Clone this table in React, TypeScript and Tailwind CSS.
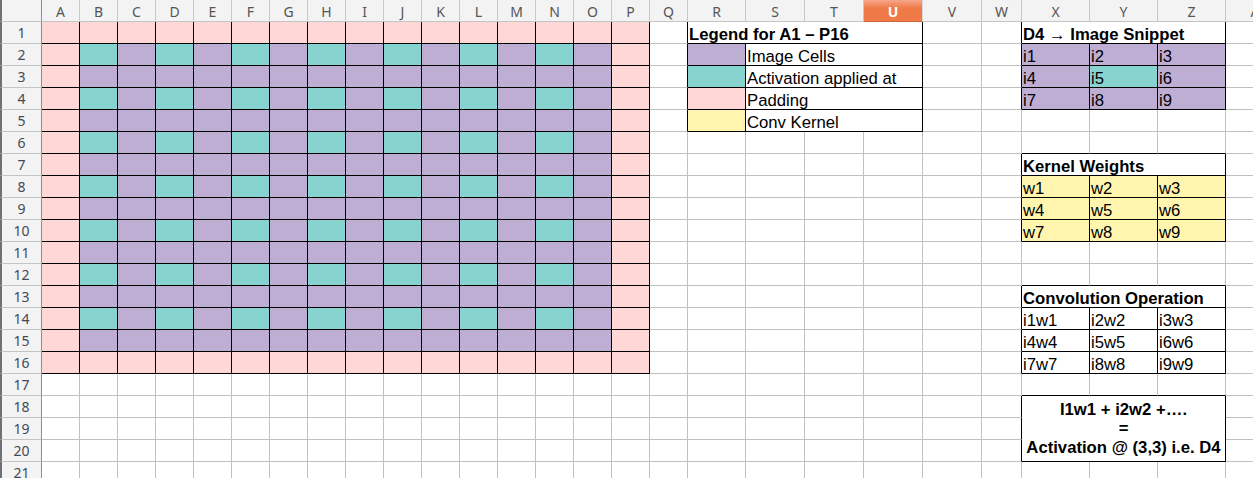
import React from 'react';
import clsx from 'clsx';

const COLS = [
  'A', 'B', 'C', 'D', 'E', 'F', 'G', 'H', 'I', 'J', 'K', 'L', 'M', 'N', 'O', 'P', 'Q',
  'R', 'S', 'T', 'U', 'V', 'W', 'X', 'Y', 'Z', 'AA',
];
const ROWS = Array.from({ length: 21 }, (_, i) => i + 1);

type Fill = 'pink' | 'teal' | 'purple' | 'yellow';

type Cell = {
  text?: string;
  fill?: Fill;
  bold?: boolean;
  colSpan?: number;
  rowSpan?: number;
  lines?: string[];
};

const fills: Record<Fill, string> = {
  pink: 'bg-[#ffd7d7]',
  teal: 'bg-[#87d3cf]',
  purple: 'bg-[#beaed4]',
  yellow: 'bg-[#fff5ae]',
};

const key = (r: number, c: number) => `${r}-${c}`;

// sheet content
const cells = new Map<string, Cell>();

for (let r = 1; r <= 16; r++) {
  for (let c = 0; c <= 15; c++) {
    let fill: Fill = 'purple';
    if (r === 1 || r === 16 || c === 0 || c === 15) fill = 'pink';
    else if (r % 2 === 0 && c % 2 === 1) fill = 'teal';
    cells.set(key(r, c), { fill });
  }
}

// legend R1:U5
cells.set(key(1, 17), { text: 'Legend for A1 – P16', bold: true, colSpan: 4 });
const legend: [Fill, string][] = [
  ['purple', 'Image Cells'],
  ['teal', 'Activation applied at'],
  ['pink', 'Padding'],
  ['yellow', 'Conv Kernel'],
];
legend.forEach(([fill, text], i) => {
  cells.set(key(i + 2, 17), { fill });
  cells.set(key(i + 2, 18), { text, colSpan: 3 });
});

// X..Z tables
const table = (top: number, title: string, fill: (n: number) => Fill, label: (n: number) => string) => {
  cells.set(key(top, 23), { text: title, bold: true, colSpan: 3 });
  for (let i = 0; i < 9; i++) {
    const n = i + 1;
    cells.set(key(top + 1 + Math.floor(i / 3), 23 + (i % 3)), { text: label(n), fill: fill(n) });
  }
};
table(1, 'D4 → Image Snippet', (n) => (n === 5 ? 'teal' : 'purple'), (n) => `i${n}`);
table(7, 'Kernel Weights', () => 'yellow', (n) => `w${n}`);
table(13, 'Convolution Operation', () => undefined as unknown as Fill, (n) => `i${n}w${n}`);
cells.set(key(18, 23), {
  colSpan: 3,
  rowSpan: 3,
  bold: true,
  lines: ['I1w1 + i2w2 +….', '=', 'Activation @ (3,3) i.e. D4'],
});

const boxed = (r: number, c: number) =>
  (r >= 1 && r <= 16 && c >= 0 && c <= 15) ||
  (r >= 1 && r <= 5 && c >= 17 && c <= 20) ||
  (c >= 23 &&
    c <= 25 &&
    ((r >= 1 && r <= 4) || (r >= 7 && r <= 10) || (r >= 13 && r <= 16) || (r >= 18 && r <= 20)));

const spanCls: Record<number, string> = { 1: '', 3: 'col-span-3', 4: 'col-span-4' };

export default function App() {
  const covered = new Set<string>();
  const body: React.ReactNode[] = [];

  ROWS.forEach((r) => {
    body.push(
      <div
        key={`rh-${r}`}
        className="flex items-center justify-center border-l-2 border-l-[#707070] border-r border-r-[#8e8e8e] border-b border-b-[#c4c4c4] bg-[#f3f3f3] font-['Noto_Sans',sans-serif] text-[14px] text-[#434a54]"
      >
        {r}
      </div>
    );
    COLS.forEach((_, c) => {
      const k = key(r, c);
      if (covered.has(k)) return;
      const cell = cells.get(k) ?? {};
      const cs = cell.colSpan ?? 1;
      const rs = cell.rowSpan ?? 1;
      for (let dr = 0; dr < rs; dr++)
        for (let dc = 0; dc < cs; dc++) if (dr || dc) covered.add(key(r + dr, c + dc));

      const rightBlack = boxed(r, c) || boxed(r, c + cs);
      const bottomBlack = boxed(r, c) || boxed(r + rs, c);

      body.push(
        <div
          key={k}
          className={clsx(
            'flex min-w-0 overflow-hidden whitespace-nowrap border-r border-b text-[16.7px] text-black',
            rightBlack ? 'border-r-black' : 'border-r-[#c0c0c0]',
            bottomBlack ? 'border-b-black' : 'border-b-[#c0c0c0]',
            cell.fill ? fills[cell.fill] : 'bg-white',
            cell.bold && 'font-bold',
            spanCls[cs],
            rs === 3 && 'row-span-3',
            cell.lines ? 'flex-col items-center justify-center leading-[19.3px]' : 'items-end pl-[1px] leading-[17px]'
          )}
        >
          {cell.lines ? cell.lines.map((l) => <span key={l}>{l}</span>) : cell.text}
        </div>
      );
    });
  });

  return (
    <div className="h-[478px] w-full overflow-hidden bg-white font-['Liberation_Sans',Arial,sans-serif]">
      <div className="grid grid-cols-[42px_repeat(17,38px)_58px_repeat(4,59px)_40px_repeat(3,68px)_68px] auto-rows-[22px]">
        <div className="border-l-2 border-l-[#707070] border-r border-r-[#8e8e8e] border-b border-b-[#c4c4c4] bg-[#f3f3f3]" />
        {COLS.map((col) =>
          col === 'U' ? (
            <div
              key={col}
              className="flex items-center justify-center border-r border-r-[#d9d9d9] border-b border-b-[#d0643a] bg-[linear-gradient(to_bottom,#f5a688,#ef7a47_40%)] pt-[2px] font-['Noto_Sans',sans-serif] text-[14px] font-bold text-white"
            >
              {col}
            </div>
          ) : (
            <div
              key={col}
              className="flex items-center justify-center border-r border-r-[#c8c8c8] border-b border-b-[#c4c4c4] bg-[#f3f3f3] pt-[2px] font-['Noto_Sans',sans-serif] text-[14px] text-[#555]"
            >
              {col}
            </div>
          )
        )}
        {body}
      </div>
    </div>
  );
}
